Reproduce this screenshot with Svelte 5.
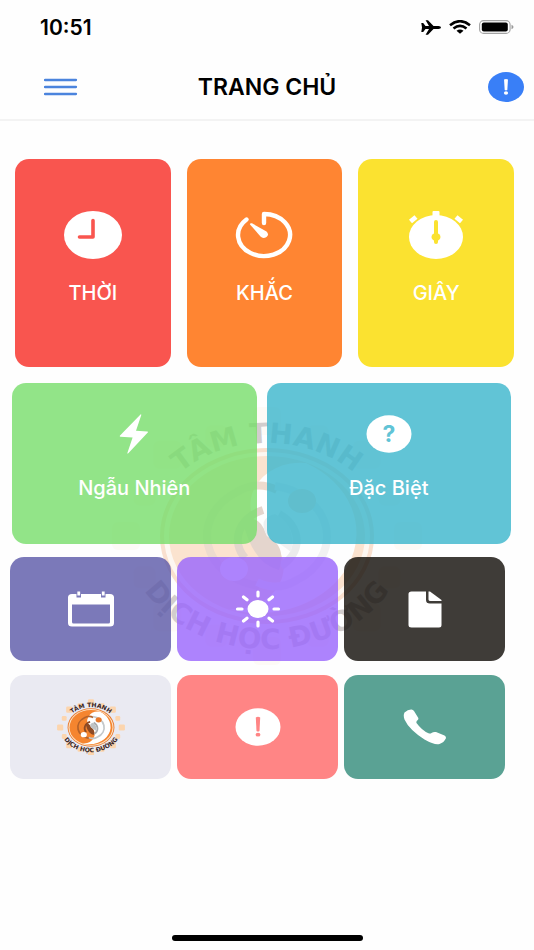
<script lang="ts">
  const units = [
    { icon: 'clock', label: 'THỜI', color: 'red' },
    { icon: 'timer', label: 'KHẮC', color: 'orange' },
    { icon: 'stopwatch', label: 'GIÂY', color: 'yellow' }
  ];

  const modes = [
    { icon: 'bolt', label: 'Ngẫu Nhiên', color: 'green' },
    { icon: 'help', label: 'Đặc Biệt', color: 'cyan' }
  ];

  const tools = [
    { icon: 'calendar', label: 'Calendar', color: 'indigo' },
    { icon: 'sun', label: 'Weather', color: 'violet' },
    { icon: 'file', label: 'Document', color: 'dark' },
    { icon: 'logo', label: 'About', color: 'light' },
    { icon: 'alert', label: 'Notice', color: 'pink' },
    { icon: 'phone', label: 'Call', color: 'teal' }
  ];

  // sun rays around the emblem
  const rays = Array.from({ length: 16 }, (_, i) => {
    const a = (i * Math.PI) / 8;
    const far = i % 2 === 0 ? 1 : 0.94;
    return { x: Math.cos(a) * 141 * far, y: Math.sin(a) * 115 * far, size: i % 2 === 0 ? 28 : 22 };
  });
</script>

{#snippet emblem(id: string)}
  <svg class="emblem" viewBox="-160 -130 320 260" aria-hidden="true">
    <defs>
      <path id="{id}-top" d="M-118 0A118 93 0 0 1 118 0" />
      <path id="{id}-bottom" d="M-140 0A140 113 0 0 0 140 0" />
    </defs>
    <g class="rays">
      {#each rays as ray}
        <rect x={ray.x - ray.size / 2} y={ray.y - ray.size / 2} width={ray.size} height={ray.size} rx="6" />
      {/each}
    </g>
    <ellipse rx="107" ry="88" fill="#e8792c" />
    <ellipse rx="103" ry="84" fill="#fde3c6" />
    <ellipse rx="98" ry="80" fill="#f5852f" />
    <path d="M39-73A98 80 0 0 1-39 73A50 42 0 0 0 0 0A50 42 0 0 1 39-73Z" fill="#fff" />
    <g fill="none" stroke-width="8">
      <path d="M-8 50A62 51 0 0 1-30-44Q-10-56 10-46" stroke="#b5622a" />
      <path d="M-22 22A40 32 0 0 1-4-26" stroke="#8d4a25" />
      <path d="M8-50A62 51 0 0 1 30 44Q10 56-10 46" stroke="#c4c8ca" />
      <path d="M12-22A40 32 0 0 1 14 30" stroke="#a9adb0" />
    </g>
    <path d="M-24-14Q-8-24 0 0Q20 10 12 34Q-14 28-24-14Z" fill="#8d4a25" />
    <path d="M0 0Q-10-18 8-22Q30-10 24 16Q14 8 0 0Z" fill="#bfc3c5" />
    <ellipse cx="35" cy="-35" rx="14" ry="12" fill="#e8792c" />
    <ellipse cx="-33" cy="33" rx="14" ry="12" fill="#fff" />
    <text class="top-text"><textPath href="#{id}-top" startOffset="50%">TÂM THANH</textPath></text>
    <text class="bottom-text"><textPath href="#{id}-bottom" startOffset="50%">DỊCH HỌC ĐƯỜNG</textPath></text>
  </svg>
{/snippet}

{#snippet icon(name: string)}
  {#if name === 'clock'}
    <svg width="58" height="48" viewBox="0 0 58 48" aria-hidden="true">
      <ellipse cx="29" cy="24" rx="29" ry="24" fill="#fff" />
      <path d="M29 9.500V26H15.500" fill="none" stroke="#f9554f" stroke-width="3.600" stroke-linecap="round" stroke-linejoin="round" />
    </svg>
  {:else if name === 'timer'}
    <svg width="58" height="48" viewBox="0 0 58 48" aria-hidden="true">
      <path d="M11.500 8.500A26 21 0 1 0 29 3V12" fill="none" stroke="#fff" stroke-width="4.400" stroke-linecap="round" stroke-linejoin="round" />
      <path d="M15 13.500Q14.500 12 17 12.300L31.500 20.500Q34.500 23.500 31.500 26Q28 28 25.500 25.500Z" fill="#fff" />
    </svg>
  {:else if name === 'stopwatch'}
    <svg width="58" height="48" viewBox="0 0 58 48" aria-hidden="true">
      <g fill="#fff">
        <ellipse cx="29" cy="26" rx="27" ry="22" />
        <rect x="25.500" y="0" width="7" height="8" rx="1" />
      </g>
      <path d="M3.500 10.500L9 6M54.500 10.500L49 6" stroke="#fff" stroke-width="4.800" />
      <path d="M29 11V31" stroke="#fbe230" stroke-width="4" stroke-linecap="round" />
      <ellipse cx="29" cy="26" rx="4.500" ry="4" fill="#fbe230" />
    </svg>
  {:else if name === 'bolt'}
    <svg width="46" height="40" viewBox="0 0 46 40" aria-hidden="true">
      <path d="M29.500 0.500L8.800 21.700Q8.500 22.700 9.500 22.800L21.600 23.600L16.300 39.200Q16.500 40 17.300 39.200L37 18.300Q37.200 17.500 36.300 17.400L25 16.700L30.300 1Q30.300 0 29.500 0.500Z" fill="#fff" />
    </svg>
  {:else if name === 'help'}
    <svg width="46" height="40" viewBox="0 0 46 40" aria-hidden="true">
      <ellipse cx="23" cy="20" rx="22.500" ry="18.700" fill="#fff" />
      <text x="23" y="28" class="mark">?</text>
    </svg>
  {:else if name === 'calendar'}
    <svg width="46" height="36" viewBox="0 0 46 36" aria-hidden="true">
      <path d="M4 3H8.500V6.500H13V3H33V6.500H37.500V3H42Q46 3 46 6.500V32Q46 35.500 42 35.500H4Q0 35.500 0 32V6.500Q0 3 4 3ZM4 13.500V31Q4 32.500 5.500 32.500H40.500Q42 32.500 42 31V13.500Z" fill="#fff" fill-rule="evenodd" />
      <path d="M10.750 0.500V4.500M35.250 0.500V4.500" stroke="#fff" stroke-width="2.800" />
    </svg>
  {:else if name === 'sun'}
    <svg width="46" height="38" viewBox="0 0 46 38" aria-hidden="true">
      <ellipse cx="23" cy="19" rx="10.500" ry="9" fill="#fff" />
      <path d="M23 2V6M23 32V36M2.500 19H7M39 19H43.500M8.500 7L12 9.800M37.500 7L34 9.800M8.500 31L12 28.200M37.500 31L34 28.200" stroke="#fff" stroke-width="3.200" stroke-linecap="round" />
    </svg>
  {:else if name === 'file'}
    <svg width="34" height="37" viewBox="0 0 34 37" aria-hidden="true">
      <path d="M3.500 0.500H18V9Q18 12.500 22 12.500H33.500V34Q33.500 36.500 31 36.500H3.500Q0.500 36.500 0.500 34V3Q0.500 0.500 3.500 0.500Z" fill="#fff" />
      <path d="M20.500 0.500H22L33.500 9V10H22.500Q20.500 10 20.500 8.500Z" fill="#fff" />
    </svg>
  {:else if name === 'alert'}
    <svg width="46" height="38" viewBox="0 0 46 38" aria-hidden="true">
      <ellipse cx="23" cy="19" rx="22.500" ry="18.700" fill="#fff" />
      <path d="M20.800 9.500Q23 8 25.200 9.500L24.500 23Q23 24 21.500 23Z" fill="#ff8585" />
      <ellipse cx="23" cy="26.700" rx="2.400" ry="1.900" fill="#ff8585" />
    </svg>
  {:else if name === 'phone'}
    <svg width="44" height="36" viewBox="0 0 44 36" aria-hidden="true">
      <path d="M1.500 3.500Q5 0.300 8.500 0.500Q10 0.700 11 2L15 8.500Q16 10 14.500 11.300Q13 12.300 13.500 14Q19 21.500 25.500 24.300Q27.500 25 28.500 24Q30.500 22.500 33 23L41.500 26.500Q43.500 27.800 42.800 29.500Q41 33.500 36.500 35Q32 36.500 21.500 30.500Q6 20.500 1.500 10.500Q0 6 1.500 3.500Z" fill="#fff" />
    </svg>
  {/if}
{/snippet}

<div class="screen">
  <div class="status-bar">
    <span class="time">10:51</span>
    <div class="status-icons">
      <svg width="20" height="15" viewBox="0 0 20 15" aria-hidden="true">
        <path d="M0.300 3H2.200L4.500 5.900H8L4.600 0.300H7L12.500 5.900H17.500Q20 6.300 20 7.500Q20 8.700 17.500 9.100H12.500L7 14.700H4.600L8 9.100H4.500L2.200 12H0.300L1 7.500Z" fill="#000" />
      </svg>
      <svg width="22" height="14" viewBox="0 0 22 14" aria-hidden="true">
        <path d="M1 5.200Q11-2.800 21 5.200M4.500 8.500Q11 3.200 17.500 8.500" fill="none" stroke="#000" stroke-width="2.600" />
        <path d="M7.500 10.800Q11 8 14.500 10.800L11 13.800Z" fill="#000" />
      </svg>
      <svg width="35" height="14" viewBox="0 0 35 14" aria-hidden="true">
        <rect x="0.600" y="0.600" width="30.500" height="12.800" rx="4" fill="none" stroke="#a3a3a3" stroke-width="1.100" />
        <rect x="2.800" y="2.500" width="26" height="9" rx="2" fill="#000" />
        <path d="M32.500 4.800Q34.500 5.500 34.500 7Q34.500 8.500 32.500 9.200Z" fill="#999" />
      </svg>
    </div>
  </div>

  <header class="header">
    <button class="menu-button" aria-label="Menu">
      <svg width="34" height="18" viewBox="0 0 34 18" aria-hidden="true">
        <path d="M1 2H32M1 9H32M1 16H32" stroke="#4b84dd" stroke-width="2.300" stroke-linecap="round" />
      </svg>
    </button>
    <h1>TRANG CHỦ</h1>
    <button class="info-button" aria-label="Information">
      <svg width="36" height="30" viewBox="0 0 36 30" aria-hidden="true">
        <ellipse cx="18" cy="15" rx="18" ry="15" fill="#397ff7" />
        <path d="M16 7.500Q18 6.300 20 7.500L19.300 18Q18 18.800 16.700 18Z" fill="#fff" />
        <ellipse cx="18" cy="21" rx="2.100" ry="1.700" fill="#fff" />
      </svg>
    </button>
  </header>

  <main>
    <div class="watermark">{@render emblem('watermark')}</div>

    <div class="row units">
      {#each units as unit}
        <button class="tile {unit.color}">
          {@render icon(unit.icon)}
          <span>{unit.label}</span>
        </button>
      {/each}
    </div>

    <div class="row modes">
      {#each modes as mode}
        <button class="tile {mode.color}">
          {@render icon(mode.icon)}
          <span>{mode.label}</span>
        </button>
      {/each}
    </div>

    <div class="row tools">
      {#each tools as tool}
        <button class="tile {tool.color}" aria-label={tool.label}>
          {#if tool.icon === 'logo'}
            <div class="logo">{@render emblem('logo')}</div>
          {:else}
            {@render icon(tool.icon)}
          {/if}
        </button>
      {/each}
    </div>

    <div class="home-indicator"></div>
  </main>
</div>

<style>
  :global(body) {
    margin: 0;
    background: #fefefe;
  }

  .screen {
    display: flex;
    flex-direction: column;
    min-height: 100vh;
    font-family: Inter, "Liberation Sans", sans-serif;
    color: #000;
  }

  button {
    border: none;
    padding: 0;
    background: none;
    font: inherit;
    cursor: pointer;
  }

  svg {
    display: block;
  }

  .status-bar {
    display: flex;
    align-items: center;
    justify-content: space-between;
    height: 54px;
    padding: 0 20px 0 40px;
  }

  .time {
    font-size: 21px;
    font-weight: 600;
  }

  .status-icons {
    display: flex;
    align-items: center;
    gap: 8px;
  }

  .header {
    display: grid;
    grid-template-columns: 1fr auto 1fr;
    align-items: center;
    height: 65px;
    padding: 0 10px;
    border-bottom: 2px solid #f3f3f3;
  }

  .menu-button {
    justify-self: start;
    padding-left: 34px;
  }

  .info-button {
    justify-self: end;
  }

  h1 {
    margin: 0;
    font-size: 23px;
    font-weight: 600;
    line-height: 28px;
  }

  main {
    position: relative;
    z-index: 0;
    display: flex;
    flex: 1;
    flex-direction: column;
    padding-top: 38px;
  }

  .watermark {
    position: absolute;
    top: 50%;
    left: 50%;
    z-index: -1;
    width: 320px;
    transform: translate(-50%, -50%);
    opacity: 0.22;
  }

  .emblem {
    width: 100%;
    height: auto;
  }

  .emblem text {
    font-family: "DejaVu Sans", sans-serif;
    font-weight: 700;
    text-anchor: middle;
    fill: #3a2626;
  }

  .rays {
    fill: #fcd5ae;
  }

  .watermark .rays {
    opacity: 0.4;
  }

  .top-text {
    font-size: 28px;
  }

  .bottom-text {
    font-size: 28px;
  }

  .row {
    display: grid;
  }

  .units {
    grid-template-columns: repeat(3, 1fr);
    gap: 16px;
    padding: 0 20px 0 15px;
  }

  .modes {
    grid-template-columns: repeat(2, 1fr);
    gap: 10px;
    margin-top: 16px;
    padding: 0 23px 0 12px;
  }

  .tools {
    grid-template-columns: repeat(3, 1fr);
    gap: 14px 6px;
    margin-top: 13px;
    padding: 0 29px 0 10px;
  }

  .tile {
    display: flex;
    flex-direction: column;
    align-items: center;
    gap: 22px;
    border-radius: 14px;
    color: #fff;
    font-size: 20px;
    font-weight: 500;
    line-height: 24px;
  }

  .units .tile {
    min-height: 208px;
    padding-top: 52px;
  }

  .modes .tile {
    min-height: 161px;
    padding-top: 31px;
  }

  .tools .tile {
    justify-content: center;
    min-height: 104px;
  }

  .logo {
    width: 70px;
  }

  .mark {
    font-size: 23px;
    font-weight: 700;
    text-anchor: middle;
    fill: #61c4d6;
  }

  .red { background: #f9554f; }
  .orange { background: #ff8532; }
  .yellow { background: #fbe230; }
  .green { background: rgb(119 221 106 / 80%); }
  .cyan { background: rgb(58 181 204 / 80%); }
  .indigo { background: rgb(90 88 168 / 80%); }
  .violet { background: rgb(153 100 253 / 80%); }
  .dark { background: rgb(15 11 6 / 80%); }
  .light { background: #eaeaf2; }
  .pink { background: #ff8585; }
  .teal { background: #5aa294; }

  .home-indicator {
    width: 191px;
    height: 6px;
    margin: auto auto 9px;
    border-radius: 3px;
    background: #000;
  }
</style>
